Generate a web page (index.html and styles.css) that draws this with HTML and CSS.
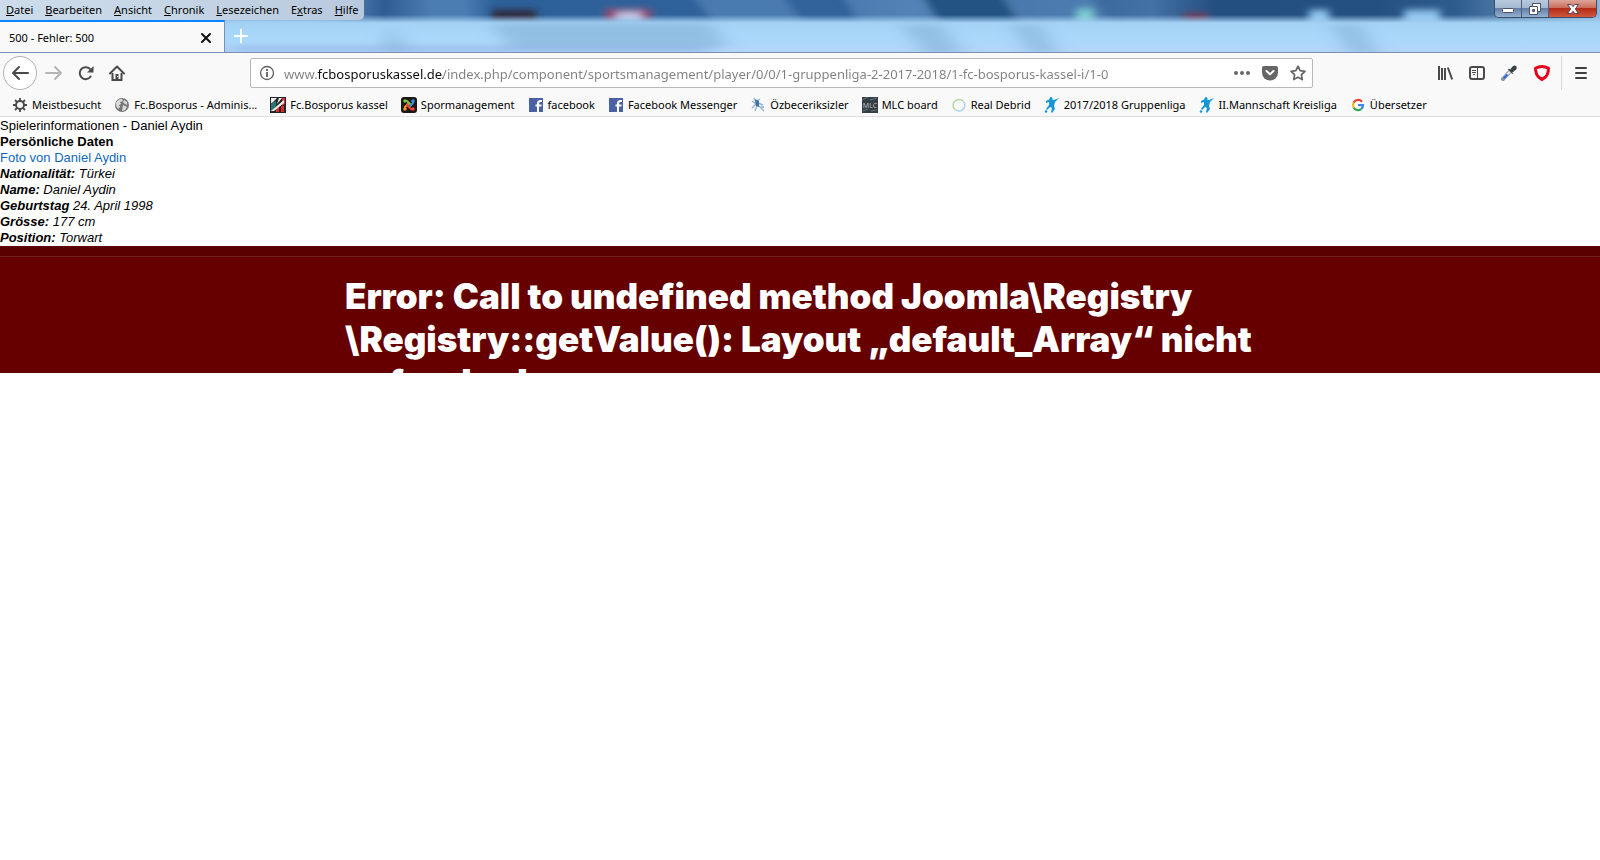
FILE: index.html
```html
<!DOCTYPE html>
<html lang="de">
<head>
<meta charset="utf-8">
<title>500 - Fehler: 500</title>
<link rel="stylesheet" href="styles.css">
</head>
<body>
<header class="browser">
  <div class="glass">
    <svg class="wallpaper" viewBox="0 0 1600 53" preserveAspectRatio="none" aria-hidden="true">
      <defs>
        <filter id="soft" x="-5%" y="-50%" width="110%" height="200%"><feGaussianBlur stdDeviation="4 3"/></filter>
        <filter id="wide" x="-5%" y="-50%" width="110%" height="200%"><feGaussianBlur stdDeviation="10 3"/></filter>
        <linearGradient id="sky" x1="0" x2="1" y1="0" y2="0">
          <stop offset="0" stop-color="#a9c4de"/><stop offset=".2" stop-color="#6f9ac4"/><stop offset=".24" stop-color="#2f5c93"/><stop offset=".27" stop-color="#4b7db2"/><stop offset=".29" stop-color="#4b7db2"/><stop offset=".31" stop-color="#2c6099"/>
          <stop offset=".53" stop-color="#32639b"/><stop offset=".57" stop-color="#4f80b3"/><stop offset=".62" stop-color="#2a5a8e"/><stop offset=".72" stop-color="#4471a6"/><stop offset=".76" stop-color="#234f80"/>
          <stop offset=".86" stop-color="#24507f"/><stop offset=".91" stop-color="#2e5c8d"/><stop offset="1" stop-color="#8fb4d8"/>
        </linearGradient>
        <linearGradient id="band" x1="0" x2="0" y1="0" y2="1">
          <stop offset="0" stop-color="#a2cdf0" stop-opacity="0"/><stop offset=".22" stop-color="#a4d2f5"/><stop offset=".6" stop-color="#a8d8fa"/><stop offset="1" stop-color="#b4d6fb"/>
        </linearGradient>
      </defs>
      <rect width="1600" height="53" fill="url(#sky)"/>
      <g filter="url(#soft)">
        <path d="M690 -8h90l30 40h-90zM840 -8h90l25 40h-90zM1000 -8h90l25 40h-100z" fill="#5485b8" opacity=".7"/>
        <path d="M920 -8h80l25 40h-80z" fill="#245282"/>
        <path d="M492 10h44v14h-44z" fill="#2d2b40"/>
        <path d="M605 9h46v14h-46z" fill="#994b73"/>
        <path d="M617 12h24v12h-24z" fill="#c3c5e6"/>
        <path d="M1077 9h16v16h-16z" fill="#7fcdd1"/>
        <path d="M1184 13h24v10h-24z" fill="#713d59"/>
        <path d="M1309 10h20v16h-20zM1404 10h36v16h-36z" fill="#8fc4ee"/>
      </g>
      <rect y="15" width="1600" height="38" fill="url(#band)"/>
      <g filter="url(#wide)" fill="#7ba8cf" opacity=".5">
        <path d="M390 26l22 28h-30zM490 24h220l20 24h-220zM900 25h40l25 30h-40zM1010 25h30l20 30h-30zM1330 25h30l20 30h-30z"/>
        <path d="M230 48h480v4h-480z" fill="#668fcb"/>
      </g>
    </svg>
    <div class="title-row">
      <nav class="menu" aria-label="Menü">
        <button><u>D</u>atei</button>
        <button><u>B</u>earbeiten</button>
        <button><u>A</u>nsicht</button>
        <button><u>C</u>hronik</button>
        <button><u>L</u>esezeichen</button>
        <button>E<u>x</u>tras</button>
        <button><u>H</u>ilfe</button>
      </nav>
      <div class="window-buttons">
        <button class="win" aria-label="Minimieren"><svg width="14" height="12" viewBox="0 0 14 12"><rect x="1.500" y="5.500" width="11" height="4" rx="1" fill="#fff" stroke="#4a5267"/></svg></button>
        <button class="win" aria-label="Verkleinern"><svg width="14" height="14" viewBox="0 0 14 14"><path d="M4.500 1.500h8v8h-8z" fill="#fff" stroke="#4a5267"/><path d="M1.500 4.500h8v8h-8z" fill="#fff" stroke="#4a5267"/><path d="M4.500 7.500h2v2h-2z" fill="#7189ac" stroke="#4a5267"/></svg></button>
        <button class="win win-close" aria-label="Schließen"><svg width="14" height="12" viewBox="0 0 14 12"><path d="M1.500 1.500h3.700L7 3.700l1.800-2.200h3.700L9.300 6l3.200 4.500H8.800L7 8.300l-1.800 2.200H1.500L4.700 6z" fill="#fff" stroke="#5b4450"/></svg></button>
      </div>
    </div>
    <div class="tab-row">
      <div class="tab">
        <span>500 - Fehler: 500</span>
        <button class="icon-button" aria-label="Tab schließen"><svg width="12" height="12" viewBox="0 0 12 12"><path d="M2 2l8 8M10 2l-8 8" stroke="#111" stroke-width="2" stroke-linecap="round"/></svg></button>
      </div>
      <button class="icon-button new-tab" aria-label="Neuer Tab"><svg width="16" height="16" viewBox="0 0 16 16"><path d="M8 1v14M1 8h14" stroke="#fff" stroke-width="2"/></svg></button>
    </div>
  </div>

  <div class="toolbar">
    <div class="nav-buttons">
      <button class="icon-button back" aria-label="Zurück"><svg width="18" height="18" viewBox="0 0 18 18"><path d="M17 9H2M8 3L2 9l6 6" fill="none" stroke="#4a4a4b" stroke-width="2" stroke-linecap="round" stroke-linejoin="round"/></svg></button>
      <button class="icon-button" aria-label="Vor"><svg width="18" height="18" viewBox="0 0 18 18"><path d="M1 9h15M10 3l6 6-6 6" fill="none" stroke="#b5b5b5" stroke-width="2" stroke-linecap="round" stroke-linejoin="round"/></svg></button>
      <button class="icon-button" aria-label="Neu laden"><svg width="16" height="16" viewBox="0 0 16 16"><path d="M12.700 11.500A6 6 0 1 1 12.500 4.500" fill="none" stroke="#4a4a4b" stroke-width="2" stroke-linecap="round"/><path d="M15.500 1v6.500H9z" fill="#4a4a4b"/></svg></button>
      <button class="icon-button" aria-label="Startseite"><svg width="16" height="16" viewBox="0 0 16 16"><path d="M1 8.500L8 1.500l7 7" fill="none" stroke="#4a4a4b" stroke-width="2" stroke-linecap="round" stroke-linejoin="round"/><path d="M3.500 8v7h9V8" fill="none" stroke="#4a4a4b" stroke-width="2"/><path d="M6.500 15V9h3v6" fill="#4a4a4b"/><path d="M8 11h1v1H8z" fill="#fff"/></svg></button>
    </div>
    <div class="address">
      <svg width="16" height="16" viewBox="0 0 16 16" aria-hidden="true"><circle cx="8" cy="8" r="6.500" fill="none" stroke="#5f5f60" stroke-width="1.300"/><path d="M7.100 7h1.800v5H7.100zM7.100 4h1.800v2H7.100z" fill="#5f5f60"/></svg>
      <input class="url" type="text" aria-label="Adresse" spellcheck="false" value="www.fcbosporuskassel.de/index.php/component/sportsmanagement/player/0/0/1-gruppenliga-2-2017-2018/1-fc-bosporus-kassel-i/1-0">
      <button class="icon-button" aria-label="Seitenaktionen"><svg width="16" height="16" viewBox="0 0 16 16" fill="#666"><circle cx="2" cy="8" r="2"/><circle cx="8" cy="8" r="2"/><circle cx="14" cy="8" r="2"/></svg></button>
      <button class="icon-button" aria-label="Pocket"><svg width="16" height="16" viewBox="0 0 16 16"><path d="M2 1h12q2 0 2 2v4.500a8 8 0 0 1-16 0V3q0-2 2-2z" fill="#666"/><path d="M4.500 6L8 9.300 11.500 6" fill="none" stroke="#fff" stroke-width="2" stroke-linecap="round" stroke-linejoin="round"/></svg></button>
      <button class="icon-button" aria-label="Lesezeichen setzen"><svg width="16" height="16" viewBox="0 0 16 16"><path d="M8 1.200l2.100 4.500 4.900.6-3.600 3.400.9 4.900L8 12.200l-4.300 2.400.9-4.900L1 6.300l4.900-.6z" fill="none" stroke="#666" stroke-width="1.700" stroke-linejoin="round"/></svg></button>
    </div>
    <div class="tools">
      <button class="icon-button" aria-label="Bibliothek"><svg width="16" height="16" viewBox="0 0 16 16"><path d="M2 1v14M5 3v12M8 3v12M10.800 2.500L15.200 14.500" stroke="#4a4a4b" stroke-width="2"/></svg></button>
      <button class="icon-button" aria-label="Seitenleiste"><svg width="16" height="16" viewBox="0 0 16 16"><rect x="1" y="2" width="14" height="12" rx="2" fill="none" stroke="#4a4a4b" stroke-width="2"/><path d="M8.500 2v12M3 5.500h4M3 7.500h4M4 9.500h2" stroke="#4a4a4b"/></svg></button>
      <button class="icon-button" aria-label="Farbpipette"><svg width="16" height="16" viewBox="0 0 16 16"><path d="M2 14L9 6.500" stroke="#8994a1" stroke-width="4" stroke-linecap="round"/><path d="M2.500 13.500L9 6.500" stroke="#e5eaf2" stroke-width="2"/><path d="M2.500 13.500L6.500 9.500" stroke="#345fe0" stroke-width="2"/><path d="M7.500 4l4.500 4.500M9.500 5.500L12 2q1.500-1.300 2.500-.5t0 2.500L11 7z" fill="#3b4346" stroke="#3b4346" stroke-width="1.500"/></svg></button>
      <button class="icon-button" aria-label="Schutz"><svg width="18" height="18" viewBox="0 0 18 18"><path d="M9 2.500q3.500 0 6.500 1.700-.2 6-3 8.800L9 15.500 5.500 13q-2.800-2.800-3-8.800Q5.500 2.500 9 2.500z" fill="#f9f9fa" stroke="#e60019" stroke-width="3" stroke-linejoin="round"/></svg></button>
      <button class="icon-button main-menu" aria-label="Menü öffnen"><svg width="14" height="14" viewBox="0 0 14 14"><path d="M2 2h10M2 7h10M2 12h10" stroke="#3f3f40" stroke-width="2" stroke-linecap="round"/></svg></button>
    </div>
  </div>

  <nav class="bookmarks" aria-label="Lesezeichen-Symbolleiste">
    <a href="#"><svg viewBox="0 0 16 16"><circle cx="8" cy="8" r="4" fill="none" stroke="#4a4a4b" stroke-width="2"/><path d="M8 1v3M8 12v3M1 8h3M12 8h3M3 3l2.200 2.200M10.800 10.800L13 13M13 3l-2.200 2.200M5.200 10.800L3 13" stroke="#4a4a4b" stroke-width="1.800"/></svg>Meistbesucht</a>
    <a href="#"><svg viewBox="0 0 16 16"><circle cx="8" cy="8" r="7" fill="#777"/><path d="M2 6q2-4 6-4l1 2-3 1 1 2-2 1 1 2-2 2Q1.500 9 2 6zM10 3l3 2v3l-2-1-2-2zM9 8l4 2-2 3-3 1z" fill="#ddd"/></svg>Fc.Bosporus - Adminis...</a>
    <a href="#"><svg viewBox="0 0 16 16"><path d="M0 0h16v16H0z" fill="#232626"/><path d="M1 1h6L1 7zM9 1h3L7 7z" fill="#eee"/><path d="M1 6l5-2v5l-5 6z" fill="#2b7774"/><path d="M12 1h3v6l-3 2zM6 9h3v6H6zM11 9h3v6h-3z" fill="#d92a2d"/><path d="M1 14L14 3v3L4 14z" fill="#eee"/></svg>Fc.Bosporus kassel</a>
    <a href="#"><svg viewBox="0 0 16 16"><rect width="16" height="16" rx="3" fill="#1d1717"/><g fill="none" stroke-width="2" stroke-linecap="round"><path d="M4 12V10l4-4" stroke="#f7941e"/><path d="M4 4h2l4 4" stroke="#7ac143"/><path d="M12 4v2l-4 4" stroke="#3a8edb"/><path d="M12 12h-2L6 8" stroke="#f04430"/></g><circle cx="4" cy="4" r="1.800" fill="#7ac143"/><circle cx="12" cy="4" r="1.800" fill="#3a8edb"/><circle cx="4" cy="12" r="1.800" fill="#f7941e"/><circle cx="12" cy="12" r="1.800" fill="#f04430"/></svg>Spormanagement</a>
    <a href="#"><svg viewBox="0 0 16 16"><path d="M1 1h14v14H1z" fill="#4a62a3"/><path d="M10 15V6.500Q10 4 12.500 4H14M7.500 8.500h6" fill="none" stroke="#fff" stroke-width="2"/></svg>facebook</a>
    <a href="#"><svg viewBox="0 0 16 16"><path d="M1 1h14v14H1z" fill="#4a62a3"/><path d="M10 15V6.500Q10 4 12.500 4H14M7.500 8.500h6" fill="none" stroke="#fff" stroke-width="2"/></svg>Facebook Messenger</a>
    <a href="#"><svg viewBox="0 0 16 16"><path d="M4 1l2 4 4-3M2 4l4 3-4 4M8 6l5 2M7 9l-2 5M9 9l5 5M11 10h3" fill="none" stroke="#8fb4da" stroke-width="1.400"/><path d="M5 2l4 2v6l-3-1z" fill="#486f9c"/></svg>Özbeceriksizler</a>
    <a href="#"><svg viewBox="0 0 16 16"><path d="M0 0h16v16H0z" fill="#343e43"/><path d="M0 3l6-3M8 3l7-2M1 14l5-2M9 14l6-1" stroke="#65757c"/><text x="8" y="11" class="mlc">MLC</text></svg>MLC board</a>
    <a href="#"><svg viewBox="0 0 16 16"><path d="M4 12.500A5.500 5.500 0 0 1 12 4" fill="none" stroke="#b5d99a" stroke-width="1.500"/><path d="M12 4A5.500 5.500 0 0 1 4 12.500" fill="none" stroke="#a9d3ef" stroke-width="1.500"/></svg>Real Debrid</a>
    <a href="#"><svg viewBox="0 0 16 16"><path d="M2 4l4-2 4 1 5-2-4 4-1 4 1 3-3 4-1-1 1-4-2-1-3 3-1-1 3-4V5L2 6z" fill="#1497d8"/><circle cx="7" cy="1.600" r="1.500" fill="#1497d8"/><circle cx="2" cy="14.500" r="1.300" fill="#1497d8"/></svg>2017/2018 Gruppenliga</a>
    <a href="#"><svg viewBox="0 0 16 16"><path d="M2 4l4-2 4 1 5-2-4 4-1 4 1 3-3 4-1-1 1-4-2-1-3 3-1-1 3-4V5L2 6z" fill="#1497d8"/><circle cx="7" cy="1.600" r="1.500" fill="#1497d8"/><circle cx="2" cy="14.500" r="1.300" fill="#1497d8"/></svg>II.Mannschaft Kreisliga</a>
    <a href="#"><svg viewBox="0 0 16 16"><circle cx="8" cy="8" r="8" fill="#fff"/><g fill="none" stroke-width="2.300"><path d="M12 4.800A5 5 0 0 0 3.700 5.600" stroke="#ea4335"/><path d="M3.700 5.600a5 5 0 0 0 0 4.900" stroke="#fbbc05"/><path d="M3.700 10.500a5 5 0 0 0 7.500 1.600" stroke="#34a853"/><path d="M11.200 12.100A5 5 0 0 0 13 8.200H8" stroke="#4285f4"/></g></svg>Übersetzer</a>
  </nav>
</header>

<main class="page">
  <p>Spielerinformationen - Daniel Aydin</p>
  <h2>Persönliche Daten</h2>
  <p><a href="#">Foto von Daniel Aydin</a></p>
  <address>
    <p><strong>Nationalität:</strong> Türkei</p>
    <p><strong>Name:</strong> Daniel Aydin</p>
    <p><strong>Geburtstag</strong> 24. April 1998</p>
    <p><strong>Grösse:</strong> 177 cm</p>
    <p><strong>Position:</strong> Torwart</p>
  </address>
  <section class="error">
    <h1>Error: Call to undefined method Joomla\Registry<br>\Registry::getValue(): Layout „default_Array“ nicht<br>gefunden!</h1>
  </section>
</main>
</body>
</html>
```
FILE: styles.css
```css
* { box-sizing: border-box; }
body {
  margin: 0;
  background: #fff;
  color: #000;
  font-family: "Liberation Sans", Arial, sans-serif;
  font-size: 13px;
  line-height: 16px;
}
button, input { font: inherit; color: inherit; }
button { margin: 0; padding: 0; border: 0; background: none; }
svg { display: block; flex: none; }

.browser {
  font-family: "Noto Sans", "Open Sans", sans-serif;
  font-size: 11px;
  background: #f9f9fa;
  border-bottom: 1px solid #dedede;
}
.glass {
  position: relative;
  border-bottom: 1px solid #7890b4;
}
.wallpaper {
  position: absolute;
  inset: 0;
  width: 100%;
  height: 100%;
}
.title-row, .tab-row { position: relative; display: flex; }
.title-row { justify-content: space-between; height: 20px; align-items: flex-start; }
.menu {
  display: flex;
  gap: 12px;
  height: 20px;
  padding: 0 6px;
  align-items: center;
  background: linear-gradient(90deg, #cddcea, #c5d5e6 50%, #b8c9de);
  border-radius: 0 0 5px 0;
}
.window-buttons {
  display: flex;
  margin-right: 3px;
  border: 1px solid #3d4e6b;
  border-top: 0;
  border-radius: 0 0 5px 5px;
  overflow: hidden;
}
.win {
  display: grid;
  place-items: center;
  width: 27px;
  height: 17px;
  border-right: 1px solid #4c607f;
  background: linear-gradient(#b9c9dd, #a3b8d2 45%, #647fa6 50%, #94b1d3);
}
.win-close {
  width: 47px;
  border-right: 0;
  background: linear-gradient(#dda599, #cb6e5c 45%, #b42b17 50%, #d1563f);
}
.tab {
  display: flex;
  align-items: center;
  justify-content: space-between;
  width: 225px;
  height: 32px;
  padding: 2px 12px 0 9px;
  background: #f9f9fa;
  border-top: 2px solid #0a84ff;
  border-right: 1px solid #7890b4;
}
.icon-button { display: grid; place-items: center; }
.new-tab { width: 32px; height: 32px; }

.toolbar {
  display: flex;
  align-items: center;
  height: 40px;
}
.nav-buttons { display: flex; align-items: center; gap: 15px; padding-left: 3px; width: 250px; }
.back {
  width: 34px;
  height: 34px;
  margin-right: -7px;
  border: 1px solid #b2b2b2;
  border-radius: 50%;
  background: #fff;
}
.address {
  display: flex;
  flex: 1;
  align-items: center;
  gap: 12px;
  height: 30px;
  padding: 0 6px 0 8px;
  background: #fff;
  border: 1px solid #b8b8b8;
  border-radius: 2px;
}
.url {
  flex: 1;
  min-width: 0;
  margin-left: -3px;
  padding: 2px 0 0;
  border: 0;
  outline: 0;
  font-size: 13px;
  background: linear-gradient(90deg, #808080 33px, #0c0c0d 33px 159px, #808080 159px);
  -webkit-background-clip: text;
  background-clip: text;
  -webkit-text-fill-color: transparent;
}
.tools {
  display: flex;
  align-items: center;
  justify-content: flex-end;
  gap: 16px;
  width: 287px;
}
.main-menu {
  width: 39px;
  height: 34px;
  border-left: 1px solid #d8d8d9;
  margin-left: -6px;
}
.bookmarks {
  display: flex;
  align-items: center;
  gap: 13px;
  height: 23px;
  padding: 0 12px;
  white-space: nowrap;
}
.bookmarks a { display: flex; align-items: center; gap: 4px; color: #000; text-decoration: none; }
.bookmarks svg { width: 16px; height: 16px; }
.mlc { font-size: 7px; fill: #b4bfc4; text-anchor: middle; }

.page { padding-top: 1px; }
.page p, .page h2 { margin: 0; font-size: 13px; line-height: 16px; }
.page a { color: #1068bf; text-decoration: none; }
.page address { font-style: italic; }
.error {
  height: 127px;
  overflow: hidden;
  background: #600;
  border-top: 10px solid #5a0000;
  color: #fff;
}
.error h1 {
  margin: 0;
  padding: 18px 0 0 345px;
  border-top: 1px solid #752020;
  font-family: Inter, "Liberation Sans", sans-serif;
  font-weight: 900;
  font-size: 35px;
  line-height: 43px;
  white-space: nowrap;
}
```
